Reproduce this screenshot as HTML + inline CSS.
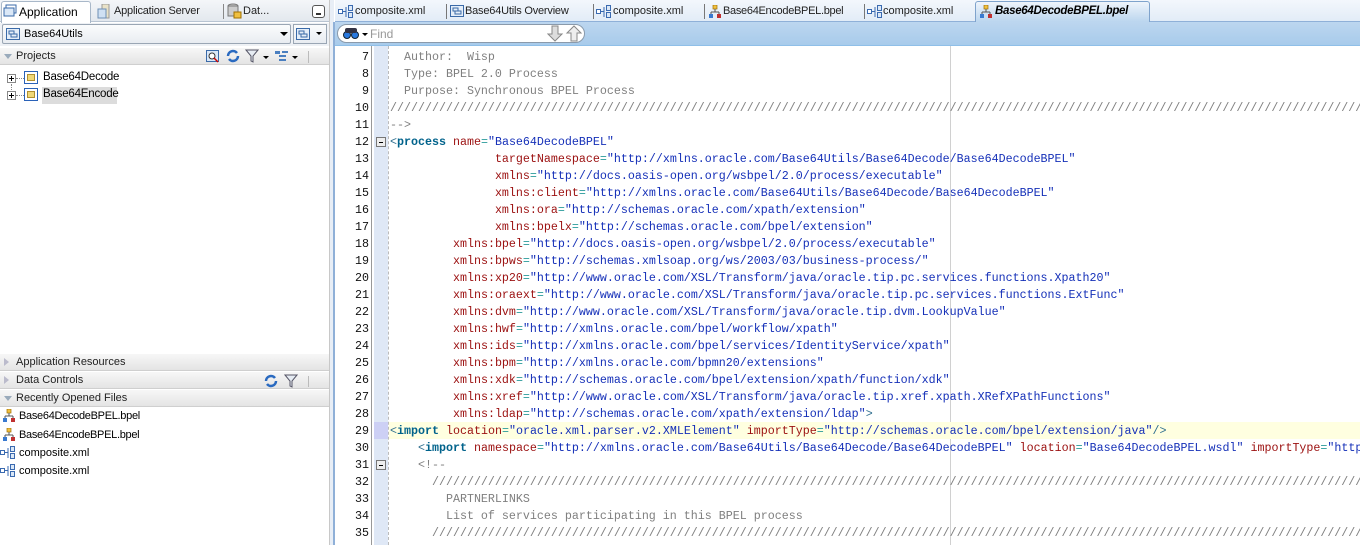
<!DOCTYPE html>
<html><head><meta charset="utf-8"><style>
*{margin:0;padding:0;box-sizing:border-box}
body{width:1360px;height:545px;overflow:hidden;background:#fff;font-family:"Liberation Sans",sans-serif;font-size:11px;color:#000;position:relative}
.a{position:absolute;white-space:nowrap}
.sec{position:absolute;left:0;width:330px;height:18px;background:linear-gradient(#f7f7f7,#e4e4e4);border-bottom:1px solid #cfcfcf;border-top:1px solid #fff;font-size:11px;line-height:17px;padding-left:16px;color:#222}
.tri{position:absolute;left:4px;top:6px;width:0;height:0}
.code{position:absolute;left:390px;font-family:"Liberation Mono",monospace;font-size:11.67px;line-height:17px;height:17px;white-space:pre;color:#000}
.ln{position:absolute;left:336px;width:33px;text-align:right;font-family:"Liberation Mono",monospace;font-size:11.67px;line-height:17px;height:17px;color:#111}
.c{color:#7f7f7f}
.t{color:#00628b;font-weight:bold}
.lt{color:#2f6f8f}
.n{color:#9b1010}
.e{color:#2a9a9a}
.v{color:#1530b8}
.fold{position:absolute;left:376px;width:10px;height:10px;border:1px solid #777;background:#eee}
.fold:after{content:"";position:absolute;left:2px;top:4px;width:4px;height:1px;background:#000}
#clip{position:absolute;left:0;top:0;width:1360px;height:545px;overflow:hidden}
</style></head><body>
<div id="clip">
<!-- left panel -->
<div class="a" style="left:0;top:0;width:330px;height:22px;background:linear-gradient(#f4f6f9,#e3e8ee);border-bottom:1px solid #b8c4d2"></div>
<div class="a" style="left:1px;top:1px;width:90px;height:22px;background:#fff;border:1px solid #a9b8c9;border-bottom:none;border-radius:3px 3px 0 0"></div>
<svg class="a" style="left:3px;top:4px" width="14" height="14"><rect x="3" y="1" width="10" height="8" fill="#fff" stroke="#3a6aa8"/><rect x="1" y="4" width="10" height="8" fill="#dbe8f7" stroke="#3a6aa8"/></svg>
<div class="a" style="left:19px;top:5px;font-size:12px">Application</div>
<svg class="a" style="left:97px;top:4px" width="14" height="15"><rect x="5" y="0" width="7" height="14" fill="#e9e2c8" stroke="#999"/><rect x="1" y="5" width="8" height="9" fill="#cfe0f3" stroke="#6d8fb5"/></svg>
<div class="a" style="left:114px;top:5px;font-size:11px;color:#222;letter-spacing:-0.2px">Application Server</div>
<div class="a" style="left:223px;top:4px;width:1px;height:15px;background:#888"></div>
<svg class="a" style="left:227px;top:3px" width="15" height="16"><ellipse cx="6" cy="3" rx="5" ry="2" fill="#ccc" stroke="#777"/><rect x="1" y="3" width="10" height="10" fill="#ccc" stroke="#777"/><rect x="7" y="9" width="7" height="6" fill="#f0c040" stroke="#a07000"/></svg>
<div class="a" style="left:243px;top:5px;font-size:11px;color:#222">Dat...</div>
<div class="a" style="left:312px;top:5px;width:13px;height:13px;border:1px solid #555;border-radius:3px;background:#fff"><div style="position:absolute;left:3px;top:7px;width:5px;height:2px;background:#333"></div></div>

<div class="a" style="left:0;top:23px;width:330px;height:23px;background:#eef1f5"></div>
<div class="a" style="left:2px;top:24px;width:289px;height:20px;background:linear-gradient(#fbfcfd,#e8ecf1);border:1px solid #9aa6b4;border-radius:2px"></div>
<svg class="a" style="left:6px;top:28px" width="14" height="12"><rect x="0.5" y="0.5" width="13" height="11" fill="#e4eef9" stroke="#3a6aa8"/><rect x="3" y="3" width="5" height="3" fill="none" stroke="#3a6aa8"/><rect x="5" y="6" width="6" height="3" fill="none" stroke="#3a6aa8"/></svg>
<div class="a" style="left:24px;top:28px;font-size:11px">Base64Utils</div>
<div class="a" style="left:280px;top:32px;border-left:4px solid transparent;border-right:4px solid transparent;border-top:4px solid #000"></div>
<div class="a" style="left:293px;top:24px;width:34px;height:20px;background:linear-gradient(#fbfcfd,#e8ecf1);border:1px solid #9aa6b4"></div>
<svg class="a" style="left:296px;top:28px" width="14" height="12"><rect x="0.5" y="0.5" width="13" height="11" fill="#e4eef9" stroke="#3a6aa8"/><rect x="3" y="3" width="5" height="3" fill="none" stroke="#3a6aa8"/><rect x="5" y="6" width="6" height="3" fill="none" stroke="#3a6aa8"/></svg>
<div class="a" style="left:316px;top:32px;border-left:3px solid transparent;border-right:3px solid transparent;border-top:3px solid #000"></div>

<div class="sec" style="top:47px">Projects<div class="tri" style="border-left:4px solid transparent;border-right:4px solid transparent;border-top:5px solid #9ab"></div></div>
<svg class="a" style="left:206px;top:50px" width="14" height="13"><rect x="0.5" y="0.5" width="12" height="11" fill="#dbe8f7" stroke="#3a6aa8"/><circle cx="6" cy="6" r="3" fill="#fff" stroke="#333"/><line x1="8" y1="8" x2="12" y2="12" stroke="#c00" stroke-width="1.5"/></svg>
<svg class="a" style="left:226px;top:49px" width="14" height="14"><path d="M2 7a5 5 0 0 1 9-3M12 7a5 5 0 0 1-9 3" fill="none" stroke="#2a6ac0" stroke-width="2.5"/></svg>
<svg class="a" style="left:245px;top:49px" width="14" height="14"><path d="M1 1h12l-5 6v6l-2-1v-5z" fill="#e6ecf3" stroke="#556"/></svg>
<div class="a" style="left:263px;top:56px;border-left:3px solid transparent;border-right:3px solid transparent;border-top:3px solid #000"></div>
<svg class="a" style="left:275px;top:50px" width="14" height="12"><rect x="0" y="1" width="5" height="3" fill="#4a7fc0"/><rect x="4" y="5" width="7" height="2" fill="#4a7fc0"/><rect x="4" y="9" width="7" height="2" fill="#4a7fc0"/><rect x="7" y="1" width="6" height="2" fill="#4a7fc0"/></svg>
<div class="a" style="left:292px;top:56px;border-left:3px solid transparent;border-right:3px solid transparent;border-top:3px solid #000"></div>
<div class="a" style="left:308px;top:51px;width:1px;height:12px;background:#bbb"></div>

<div class="a" style="left:7px;top:74px;width:9px;height:9px;border:1px solid #888;background:#fff"><div style="position:absolute;left:1px;top:3px;width:5px;height:1px;background:#000"></div><div style="position:absolute;left:3px;top:1px;width:1px;height:5px;background:#000"></div></div>
<div class="a" style="left:7px;top:91px;width:9px;height:9px;border:1px solid #888;background:#fff"><div style="position:absolute;left:1px;top:3px;width:5px;height:1px;background:#000"></div><div style="position:absolute;left:3px;top:1px;width:1px;height:5px;background:#000"></div></div>
<div class="a" style="left:16px;top:78px;width:8px;border-top:1px dotted #888"></div>
<div class="a" style="left:16px;top:95px;width:8px;border-top:1px dotted #888"></div>
<div class="a" style="left:11px;top:84px;height:6px;border-left:1px dotted #888"></div>
<div class="a" style="left:24px;top:71px;width:14px;height:13px;border:1px solid #2a62b8;background:#fff"><div style="position:absolute;left:2px;top:2px;width:8px;height:7px;background:#f0d878;border:1px solid #b09030"></div></div>
<div class="a" style="left:24px;top:88px;width:14px;height:13px;border:1px solid #2a62b8;background:#fff"><div style="position:absolute;left:2px;top:2px;width:8px;height:7px;background:#f0d878;border:1px solid #b09030"></div></div>
<div class="a" style="left:43px;top:71px;font-size:11.5px;letter-spacing:-0.2px">Base64Decode</div>
<div class="a" style="left:42px;top:87px;width:75px;height:17px;background:#dcdcdc"></div>
<div class="a" style="left:43px;top:88px;font-size:11.5px;letter-spacing:-0.2px">Base64Encode</div>

<div class="sec" style="top:353px">Application Resources<div class="tri" style="border-top:4px solid transparent;border-bottom:4px solid transparent;border-left:5px solid #bbc;top:4px"></div></div>
<div class="sec" style="top:371px">Data Controls<div class="tri" style="border-top:4px solid transparent;border-bottom:4px solid transparent;border-left:5px solid #bbc;top:4px"></div></div>
<svg class="a" style="left:264px;top:374px" width="14" height="14"><path d="M2 7a5 5 0 0 1 9-3M12 7a5 5 0 0 1-9 3" fill="none" stroke="#2a6ac0" stroke-width="2.5"/></svg>
<svg class="a" style="left:284px;top:374px" width="14" height="14"><path d="M1 1h12l-5 6v6l-2-1v-5z" fill="#e6ecf3" stroke="#556"/></svg>
<div class="a" style="left:308px;top:376px;width:1px;height:11px;background:#bbb"></div>
<div class="sec" style="top:389px">Recently Opened Files<div class="tri" style="border-left:4px solid transparent;border-right:4px solid transparent;border-top:5px solid #9ab"></div></div>

<svg class="a" style="left:3px;top:409px" width="12" height="13"><rect x="4" y="0" width="4" height="4" fill="#f0c040" stroke="#a07000" stroke-width=".7"/><path d="M6 4v3M2 7h8M2 7v2M10 7v2" stroke="#555"/><rect x="0" y="9" width="4" height="4" fill="#3a7ad0"/><rect x="8" y="9" width="4" height="4" fill="#c03030"/></svg>
<div class="a" style="left:19px;top:410px;letter-spacing:-0.3px">Base64DecodeBPEL.bpel</div>
<svg class="a" style="left:3px;top:428px" width="12" height="13"><rect x="4" y="0" width="4" height="4" fill="#f0c040" stroke="#a07000" stroke-width=".7"/><path d="M6 4v3M2 7h8M2 7v2M10 7v2" stroke="#555"/><rect x="0" y="9" width="4" height="4" fill="#3a7ad0"/><rect x="8" y="9" width="4" height="4" fill="#c03030"/></svg>
<div class="a" style="left:19px;top:429px;letter-spacing:-0.3px">Base64EncodeBPEL.bpel</div>
<svg class="a" style="left:0;top:446px" width="16" height="14"><rect x="0.5" y="4.5" width="4" height="4" fill="#fff" stroke="#3a6ab0"/><path d="M5 6.5h3M8 2v10" stroke="#3a6ab0"/><rect x="10.5" y="0.5" width="4" height="5" fill="#dbe8f7" stroke="#3a6ab0"/><rect x="10.5" y="7.5" width="4" height="5" fill="#dbe8f7" stroke="#3a6ab0"/></svg>
<div class="a" style="left:19px;top:447px">composite.xml</div>
<svg class="a" style="left:0;top:464px" width="16" height="14"><rect x="0.5" y="4.5" width="4" height="4" fill="#fff" stroke="#3a6ab0"/><path d="M5 6.5h3M8 2v10" stroke="#3a6ab0"/><rect x="10.5" y="0.5" width="4" height="5" fill="#dbe8f7" stroke="#3a6ab0"/><rect x="10.5" y="7.5" width="4" height="5" fill="#dbe8f7" stroke="#3a6ab0"/></svg>
<div class="a" style="left:19px;top:465px">composite.xml</div>

<div class="a" style="left:329px;top:0;width:1px;height:545px;background:#c8c8c8"></div>
<div class="a" style="left:330px;top:0;width:4px;height:545px;background:#e8eef6"></div>
<div class="a" style="left:333px;top:22px;width:2px;height:523px;background:#8fb0d8"></div>

<!-- editor tabs -->
<div class="a" style="left:335px;top:0;width:1025px;height:22px;background:linear-gradient(#f3f7fc,#e2ecf7);border-bottom:1px solid #8fb0d8"></div>
<div class="a" style="left:975px;top:1px;width:175px;height:22px;background:linear-gradient(#eef4fb,#b8d4ee);border:1px solid #7fa3cc;border-bottom:none;border-radius:3px 3px 0 0"></div>
<svg class="a" style="left:338px;top:5px" width="16" height="14"><rect x="0.5" y="4.5" width="4" height="4" fill="#fff" stroke="#3a6ab0"/><path d="M5 6.5h3M8 2v10" stroke="#3a6ab0"/><rect x="10.5" y="0.5" width="4" height="5" fill="#dbe8f7" stroke="#3a6ab0"/><rect x="10.5" y="7.5" width="4" height="5" fill="#dbe8f7" stroke="#3a6ab0"/></svg>
<div class="a" style="left:355px;top:5px;color:#222">composite.xml</div>
<div class="a" style="left:446px;top:4px;width:1px;height:15px;background:#777"></div>
<svg class="a" style="left:450px;top:5px" width="14" height="12"><rect x="0.5" y="0.5" width="13" height="11" fill="#e4eef9" stroke="#3a6aa8"/><rect x="3" y="3" width="5" height="3" fill="none" stroke="#3a6aa8"/><rect x="5" y="6" width="6" height="3" fill="none" stroke="#3a6aa8"/></svg>
<div class="a" style="left:465px;top:5px;color:#222;letter-spacing:-0.2px">Base64Utils Overview</div>
<div class="a" style="left:593px;top:4px;width:1px;height:15px;background:#777"></div>
<svg class="a" style="left:596px;top:5px" width="16" height="14"><rect x="0.5" y="4.5" width="4" height="4" fill="#fff" stroke="#3a6ab0"/><path d="M5 6.5h3M8 2v10" stroke="#3a6ab0"/><rect x="10.5" y="0.5" width="4" height="5" fill="#dbe8f7" stroke="#3a6ab0"/><rect x="10.5" y="7.5" width="4" height="5" fill="#dbe8f7" stroke="#3a6ab0"/></svg>
<div class="a" style="left:613px;top:5px;color:#222">composite.xml</div>
<div class="a" style="left:704px;top:4px;width:1px;height:15px;background:#777"></div>
<svg class="a" style="left:709px;top:5px" width="12" height="13"><rect x="4" y="0" width="4" height="4" fill="#f0c040" stroke="#a07000" stroke-width=".7"/><path d="M6 4v3M2 7h8M2 7v2M10 7v2" stroke="#555"/><rect x="0" y="9" width="4" height="4" fill="#3a7ad0"/><rect x="8" y="9" width="4" height="4" fill="#c03030"/></svg>
<div class="a" style="left:723px;top:5px;color:#222;letter-spacing:-0.3px">Base64EncodeBPEL.bpel</div>
<div class="a" style="left:864px;top:4px;width:1px;height:15px;background:#777"></div>
<svg class="a" style="left:867px;top:5px" width="16" height="14"><rect x="0.5" y="4.5" width="4" height="4" fill="#fff" stroke="#3a6ab0"/><path d="M5 6.5h3M8 2v10" stroke="#3a6ab0"/><rect x="10.5" y="0.5" width="4" height="5" fill="#dbe8f7" stroke="#3a6ab0"/><rect x="10.5" y="7.5" width="4" height="5" fill="#dbe8f7" stroke="#3a6ab0"/></svg>
<div class="a" style="left:883px;top:5px;color:#222">composite.xml</div>
<svg class="a" style="left:980px;top:5px" width="12" height="13"><rect x="4" y="0" width="4" height="4" fill="#f0c040" stroke="#a07000" stroke-width=".7"/><path d="M6 4v3M2 7h8M2 7v2M10 7v2" stroke="#555"/><rect x="0" y="9" width="4" height="4" fill="#3a7ad0"/><rect x="8" y="9" width="4" height="4" fill="#c03030"/></svg>
<div class="a" style="left:995px;top:5px;font-weight:bold;font-style:italic;font-size:11.5px;letter-spacing:-0.3px">Base64DecodeBPEL.bpel</div>

<div class="a" style="left:335px;top:22px;width:1025px;height:24px;background:linear-gradient(#bcd6ef,#a8cbeb);border-bottom:1px solid #8fbfe8"></div>
<div class="a" style="left:337px;top:24px;width:248px;height:19px;background:#fff;border:1px solid #8a9aab;border-radius:10px"></div>
<svg class="a" style="left:343px;top:27px" width="16" height="13"><circle cx="4" cy="8" r="3.5" fill="#2a7ae0" stroke="#123"/><circle cx="12" cy="8" r="3.5" fill="#2a7ae0" stroke="#123"/><rect x="2" y="1" width="12" height="5" rx="2" fill="#334"/></svg>
<div class="a" style="left:362px;top:33px;border-left:3px solid transparent;border-right:3px solid transparent;border-top:3px solid #000"></div>
<div class="a" style="left:370px;top:27px;color:#999;font-size:12px">Find</div>
<svg class="a" style="left:547px;top:25px" width="36" height="17"><path d="M5 1h6v8h4l-7 7-7-7h4z" fill="#ddd" stroke="#888"/><path d="M24 16h6v-8h4l-7-7-7 7h4z" fill="#eee" stroke="#888"/></svg>

<div class="a" style="left:371px;top:46px;width:1px;height:499px;background:#999"></div>
<div class="a" style="left:374px;top:46px;width:14px;height:499px;background:#dfe8f6"></div>
<div class="a" style="left:388px;top:46px;height:499px;border-left:1px dashed #bbb"></div>
<div class="a" style="left:950px;top:46px;width:1px;height:499px;background:#d0d0d0"></div>
<div class="a" style="left:389px;top:422px;width:971px;height:17px;background:#ffffe0"></div>
<div class="a" style="left:374px;top:422px;width:14px;height:17px;background:#cdd0f5"></div>
<div class="fold" style="top:137px"></div>
<div class="fold" style="top:460px"></div>

<div class="ln" style="top:49px">7</div><div class="ln" style="top:66px">8</div><div class="ln" style="top:83px">9</div><div class="ln" style="top:100px">10</div><div class="ln" style="top:117px">11</div><div class="ln" style="top:134px">12</div><div class="ln" style="top:151px">13</div><div class="ln" style="top:168px">14</div><div class="ln" style="top:185px">15</div><div class="ln" style="top:202px">16</div><div class="ln" style="top:219px">17</div><div class="ln" style="top:236px">18</div><div class="ln" style="top:253px">19</div><div class="ln" style="top:270px">20</div><div class="ln" style="top:287px">21</div><div class="ln" style="top:304px">22</div><div class="ln" style="top:321px">23</div><div class="ln" style="top:338px">24</div><div class="ln" style="top:355px">25</div><div class="ln" style="top:372px">26</div><div class="ln" style="top:389px">27</div><div class="ln" style="top:406px">28</div><div class="ln" style="top:423px">29</div><div class="ln" style="top:440px">30</div><div class="ln" style="top:457px">31</div><div class="ln" style="top:474px">32</div><div class="ln" style="top:491px">33</div><div class="ln" style="top:508px">34</div><div class="ln" style="top:525px">35</div>

<div class="code c" style="top:49px">  Author:  Wisp</div>
<div class="code c" style="top:66px">  Type: BPEL 2.0 Process</div>
<div class="code c" style="top:83px">  Purpose: Synchronous BPEL Process</div>
<div class="code c" style="top:100px">////////////////////////////////////////////////////////////////////////////////////////////////////////////////////////////////////////////////////</div>
<div class="code c" style="top:117px">--&gt;</div>
<div class="code" style="top:134px"><span class="lt">&lt;</span><span class="t">process</span> <span class="n">name</span><span class="e">=</span><span class="v">"Base64DecodeBPEL"</span></div>
<div class="code" style="top:151px">               <span class="n">targetNamespace</span><span class="e">=</span><span class="v">"http://xmlns.oracle.com/Base64Utils/Base64Decode/Base64DecodeBPEL"</span></div>
<div class="code" style="top:168px">               <span class="n">xmlns</span><span class="e">=</span><span class="v">"http://docs.oasis-open.org/wsbpel/2.0/process/executable"</span></div>
<div class="code" style="top:185px">               <span class="n">xmlns:client</span><span class="e">=</span><span class="v">"http://xmlns.oracle.com/Base64Utils/Base64Decode/Base64DecodeBPEL"</span></div>
<div class="code" style="top:202px">               <span class="n">xmlns:ora</span><span class="e">=</span><span class="v">"http://schemas.oracle.com/xpath/extension"</span></div>
<div class="code" style="top:219px">               <span class="n">xmlns:bpelx</span><span class="e">=</span><span class="v">"http://schemas.oracle.com/bpel/extension"</span></div>
<div class="code" style="top:236px">         <span class="n">xmlns:bpel</span><span class="e">=</span><span class="v">"http://docs.oasis-open.org/wsbpel/2.0/process/executable"</span></div>
<div class="code" style="top:253px">         <span class="n">xmlns:bpws</span><span class="e">=</span><span class="v">"http://schemas.xmlsoap.org/ws/2003/03/business-process/"</span></div>
<div class="code" style="top:270px">         <span class="n">xmlns:xp20</span><span class="e">=</span><span class="v">"http://www.oracle.com/XSL/Transform/java/oracle.tip.pc.services.functions.Xpath20"</span></div>
<div class="code" style="top:287px">         <span class="n">xmlns:oraext</span><span class="e">=</span><span class="v">"http://www.oracle.com/XSL/Transform/java/oracle.tip.pc.services.functions.ExtFunc"</span></div>
<div class="code" style="top:304px">         <span class="n">xmlns:dvm</span><span class="e">=</span><span class="v">"http://www.oracle.com/XSL/Transform/java/oracle.tip.dvm.LookupValue"</span></div>
<div class="code" style="top:321px">         <span class="n">xmlns:hwf</span><span class="e">=</span><span class="v">"http://xmlns.oracle.com/bpel/workflow/xpath"</span></div>
<div class="code" style="top:338px">         <span class="n">xmlns:ids</span><span class="e">=</span><span class="v">"http://xmlns.oracle.com/bpel/services/IdentityService/xpath"</span></div>
<div class="code" style="top:355px">         <span class="n">xmlns:bpm</span><span class="e">=</span><span class="v">"http://xmlns.oracle.com/bpmn20/extensions"</span></div>
<div class="code" style="top:372px">         <span class="n">xmlns:xdk</span><span class="e">=</span><span class="v">"http://schemas.oracle.com/bpel/extension/xpath/function/xdk"</span></div>
<div class="code" style="top:389px">         <span class="n">xmlns:xref</span><span class="e">=</span><span class="v">"http://www.oracle.com/XSL/Transform/java/oracle.tip.xref.xpath.XRefXPathFunctions"</span></div>
<div class="code" style="top:406px">         <span class="n">xmlns:ldap</span><span class="e">=</span><span class="v">"http://schemas.oracle.com/xpath/extension/ldap"</span><span class="lt">&gt;</span></div>
<div class="code" style="top:423px"><span class="lt">&lt;</span><span class="t">import</span> <span class="n">location</span><span class="e">=</span><span class="v">"oracle.xml.parser.v2.XMLElement"</span> <span class="n">importType</span><span class="e">=</span><span class="v">"http://schemas.oracle.com/bpel/extension/java"</span><span class="lt">/&gt;</span></div>
<div class="code" style="top:440px">    <span class="lt">&lt;</span><span class="t">import</span> <span class="n">namespace</span><span class="e">=</span><span class="v">"http://xmlns.oracle.com/Base64Utils/Base64Decode/Base64DecodeBPEL"</span> <span class="n">location</span><span class="e">=</span><span class="v">"Base64DecodeBPEL.wsdl"</span> <span class="n">importType</span><span class="e">=</span><span class="v">"http://schemas.xmlsoap.org/wsdl/"</span></div>
<div class="code c" style="top:457px">    &lt;!--</div>
<div class="code c" style="top:474px">      ////////////////////////////////////////////////////////////////////////////////////////////////////////////////////////////////////////////////</div>
<div class="code c" style="top:491px">        PARTNERLINKS</div>
<div class="code c" style="top:508px">        List of services participating in this BPEL process</div>
<div class="code c" style="top:525px">      ////////////////////////////////////////////////////////////////////////////////////////////////////////////////////////////////////////////////</div>
</div>
</body></html>
